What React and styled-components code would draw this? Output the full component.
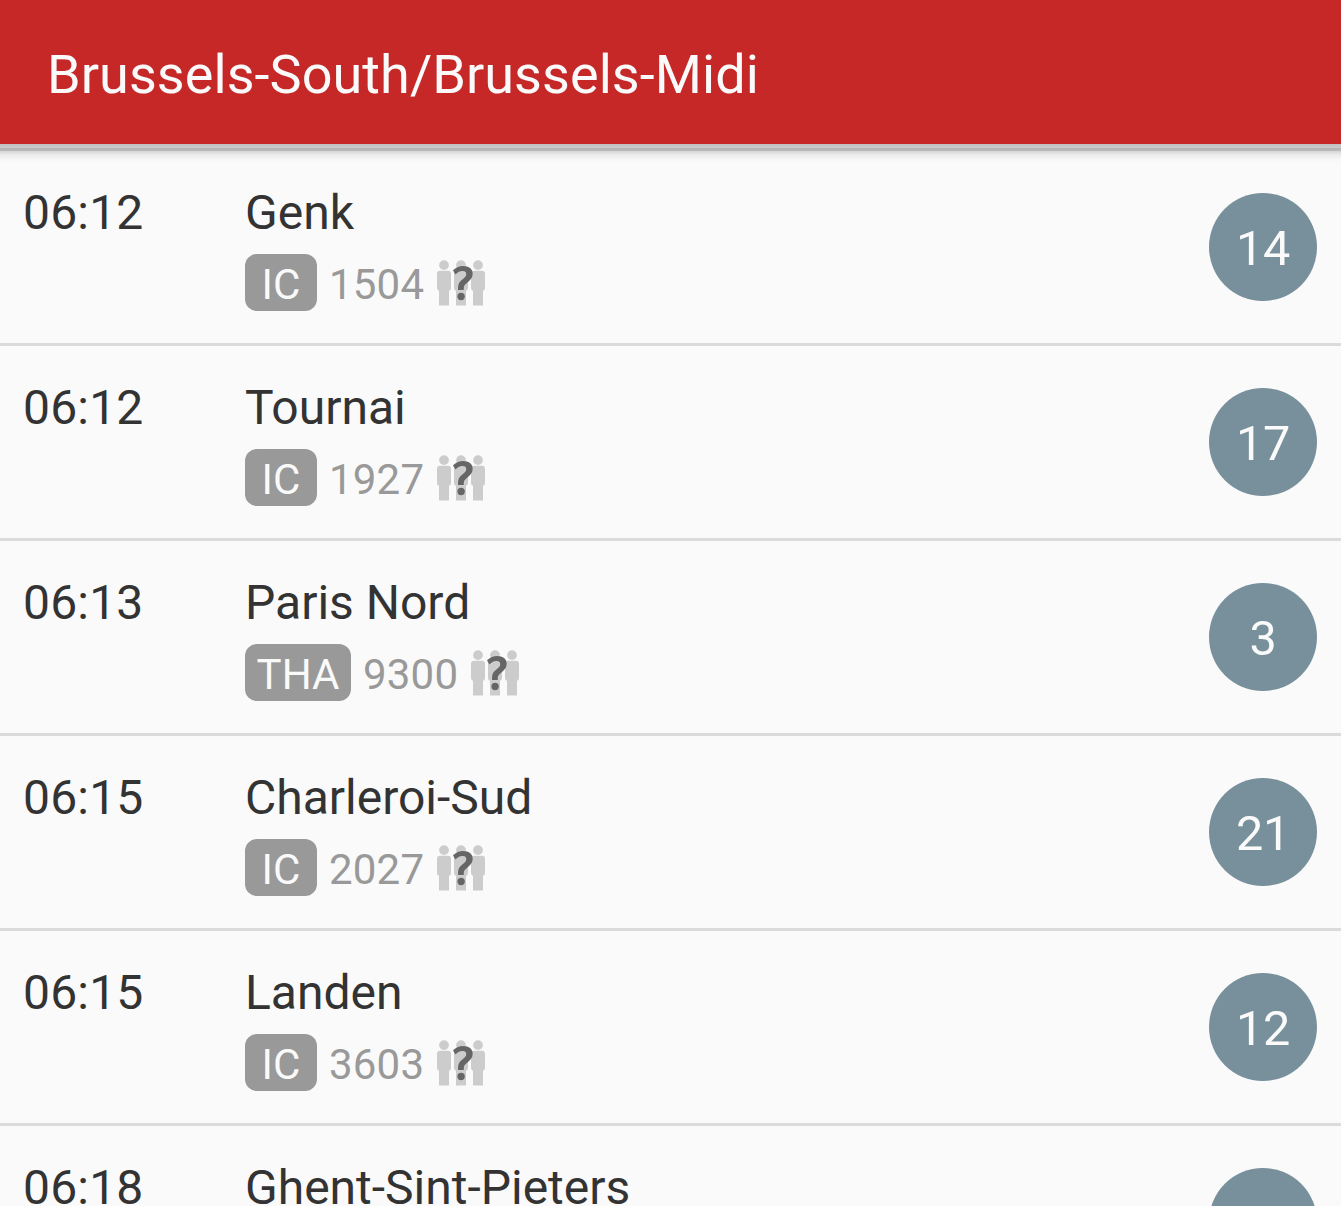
import React from 'react';
import styled, { createGlobalStyle } from 'styled-components';

const GlobalStyle = createGlobalStyle`
  * { box-sizing: border-box; }
  html, body { margin: 0; overflow: hidden; background: #fafafa; }
  body { font-family: Roboto, sans-serif; color: #333; }
`;

const Screen = styled.main`
  height: 1206px;
  overflow: hidden;
`;

const Toolbar = styled.header`
  position: relative;
  height: 144px;
  padding: 5px 47px 0;
  display: flex;
  align-items: center;
  background: #c62828;
  color: #fafafa;

  &::after {
    content: '';
    position: absolute;
    top: 100%;
    left: 0;
    right: 0;
    height: 19px;
    background:
      linear-gradient(
        to bottom,
        rgba(0, 0, 0, 0.23) 0,
        rgba(0, 0, 0, 0.19) 4px,
        rgba(0, 0, 0, 0.14) 7px,
        rgba(0, 0, 0, 0.06) 11px,
        rgba(0, 0, 0, 0.015) 15px,
        transparent 19px
      );
  }
`;

const Title = styled.h1`
  margin: 0;
  font-size: 54px;
  font-weight: 400;
  line-height: 64px;
  letter-spacing: 0.06px;
  white-space: nowrap;
`;

const List = styled.ul`
  list-style: none;
  margin: 4px 0 0;
  padding: 0;
  border-top: 3px solid #dbdbdb;
`;

const Row = styled.li`
  height: 195px;
  padding: 33px 24px 0 23px;
  display: flex;
  align-items: flex-start;
  border-bottom: 3px solid #dbdbdb;
`;

const Time = styled.time`
  width: 222px;
  font-size: 48px;
  line-height: 57px;
  letter-spacing: 0.2px;
`;

const Details = styled.div`
  flex: 1;
`;

const Destination = styled.div`
  font-size: 48px;
  line-height: 57px;
`;

const Meta = styled.div`
  display: flex;
  align-items: flex-start;
  margin-top: 13px;
`;

const Badge = styled.span`
  width: ${(p) => (p.$wide ? 106 : 72)}px;
  height: 57px;
  padding-top: 2px;
  border-radius: 12px;
  background: #999;
  color: #fafafa;
  font-size: 42px;
  line-height: 57px;
  text-align: center;
`;

const TrainNumber = styled.span`
  width: 95px;
  padding-top: 2px;
  margin: 0 12px;
  color: #999;
  font-size: 42px;
  line-height: 57px;
  letter-spacing: 0.2px;
`;

const Platform = styled.div`
  width: 108px;
  height: 108px;
  margin-top: 9px;
  padding-top: 2px;
  border-radius: 50%;
  background: #78909c;
  color: #fafafa;
  font-size: 48.6px;
  line-height: 108px;
  letter-spacing: -0.2px;
  text-align: center;
`;

const OccupancyIcon = styled.svg`
  display: block;
  flex: none;
  margin-top: 6px;
`;

const Occupancy = () => (
  <OccupancyIcon width="50" height="48" viewBox="0 0 50 48">
    <g fill="#ccc">
      {[0, 17, 34].map((x) => (
        <g key={x} transform={`translate(${x} 0)`}>
          <circle cx="8" cy="5.1" r="4.9" />
          <path d="M4 10.8h8q3 0 3 3v14q0 2.7-2 3v14.8H3V30.8q-2-.3-2-3v-14q0-3 3-3z" />
        </g>
      ))}
    </g>
    <g fill="#666" stroke="#fafafa" strokeOpacity="0.2" strokeWidth="1" paintOrder="stroke">
      <path d="M17 10.2Q21.5 5.9 27 5.9C33 5.9 36.7 8.8 36.7 13.8C36.7 17.7 34.5 20 31.5 22.4C28.8 24.5 27.8 25.5 27.8 28.2V29.9H22V27.7C22 23.7 23.3 21.8 26.3 19.4C29 17.2 30.2 16.2 30.2 14.2C30.2 12.2 29 11.1 26.5 11.1C24 11.1 22 12.1 19.3 14.6Z" />
      <circle cx="25.1" cy="36.5" r="3.7" />
    </g>
  </OccupancyIcon>
);

const departures = [
  ['06:12', 'Genk', 'IC', '1504', '14'],
  ['06:12', 'Tournai', 'IC', '1927', '17'],
  ['06:13', 'Paris Nord', 'THA', '9300', '3'],
  ['06:15', 'Charleroi-Sud', 'IC', '2027', '21'],
  ['06:15', 'Landen', 'IC', '3603', '12'],
  ['06:18', 'Ghent-Sint-Pieters', '', '', '10'],
];

export default function App() {
  return (
    <Screen>
      <GlobalStyle />
      <Toolbar><Title>Brussels-South/Brussels-Midi</Title></Toolbar>
      <List>
        {departures.map(([time, destination, type, number, platform]) => (
          <Row key={time + destination}>
            <Time>{time}</Time>
            <Details>
              <Destination>{destination}</Destination>
              {number && (
                <Meta>
                  <Badge $wide={type.length > 2}>{type}</Badge>
                  <TrainNumber>{number}</TrainNumber>
                  <Occupancy />
                </Meta>
              )}
            </Details>
            <Platform>{platform}</Platform>
          </Row>
        ))}
      </List>
    </Screen>
  );
}
